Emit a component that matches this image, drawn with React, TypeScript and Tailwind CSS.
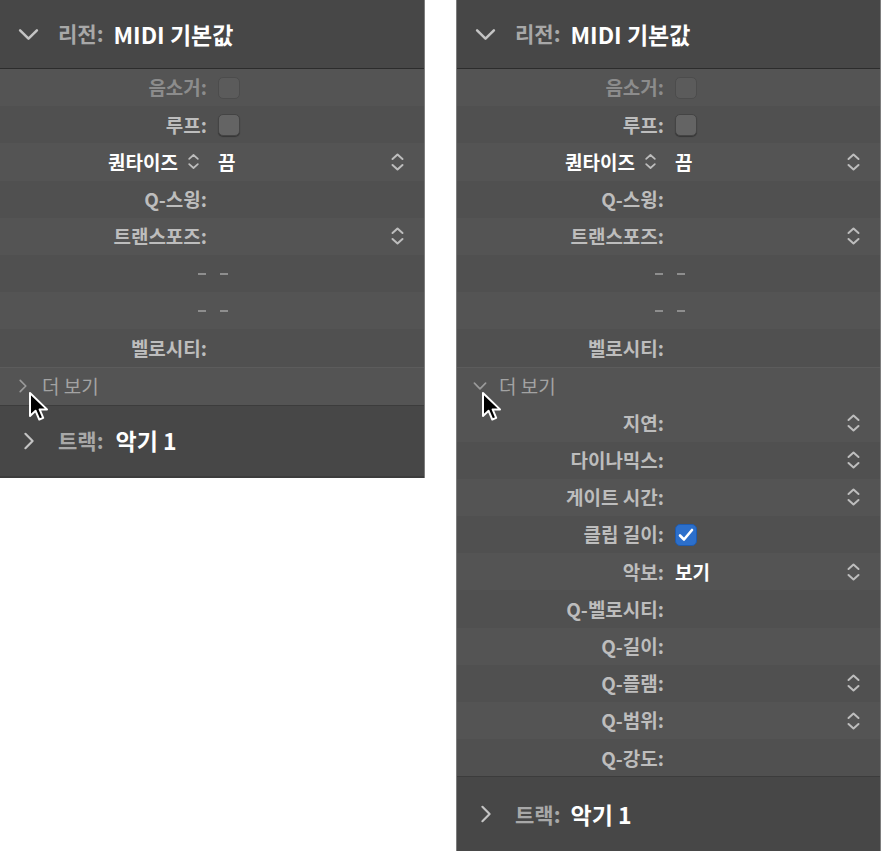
import React from "react";

const font = { fontFamily: '"Noto Sans CJK KR", "Noto Sans", sans-serif' };

function UpDown({ small = false }: { small?: boolean }) {
  return (
    <svg
      width={small ? 13 : 15}
      height={small ? 19 : 20}
      viewBox="0 0 15 20"
      fill="none"
      stroke="#bdbdbd"
      strokeWidth="2"
      strokeLinecap="round"
      strokeLinejoin="round"
    >
      <path d="M2.5 7 L7.5 2.5 L12.5 7" />
      <path d="M2.5 13 L7.5 17.5 L12.5 13" />
    </svg>
  );
}

function Chevron({ dir, size = 20, color = "#c4c4c4", stroke = 2.4 }: { dir: "down" | "right"; size?: number; color?: string; stroke?: number }) {
  return (
    <svg width={size} height={size} viewBox="0 0 20 20" fill="none" stroke={color} strokeWidth={stroke} strokeLinecap="round" strokeLinejoin="round">
      {dir === "down" ? <path d="M2 6 L10 14 L18 6" /> : <path d="M6 2 L14 10 L6 18" />}
    </svg>
  );
}

function Cursor({ left }: { left: string }) {
  return (
    <svg width="23" height="32" viewBox="0 0 23 32" className={`absolute top-[23px] ${left}`}>
      <path
        d="M2 2 L2 25 L7.6 19.8 L11.3 28.5 L15.2 26.8 L11.6 18.4 L19 18.4 Z"
        fill="#000"
        stroke="#fff"
        strokeWidth="2"
        strokeLinejoin="round"
      />
    </svg>
  );
}

function Checkbox({ dim = false, checked = false }: { dim?: boolean; checked?: boolean }) {
  if (checked) {
    return (
      <div className="w-[22px] h-[22px] rounded-[5px] bg-[#2c6fcb] border border-[#1d5bb0] flex items-center justify-center">
        <svg width="16" height="14" viewBox="0 0 16 14" fill="none" stroke="#fff" strokeWidth="2.6" strokeLinecap="round" strokeLinejoin="round">
          <path d="M2 7.5 L6 11.5 L14 2" />
        </svg>
      </div>
    );
  }
  return (
    <div
      className={
        dim
          ? "w-[22px] h-[22px] rounded-[5px] bg-[#5b5b5b] border border-[#4c4c4c]"
          : "w-[22px] h-[22px] rounded-[5px] bg-[#646464] border border-[#444] shadow-[0_1px_1px_rgba(0,0,0,0.35)]"
      }
    />
  );
}

type Row = {
  label?: string;
  dim?: boolean;
  white?: boolean;
  value?: React.ReactNode;
  updown?: boolean;
  dashes?: boolean;
  labelChevron?: boolean;
};

function Dash() {
  return <span className="block w-[8px] h-[2px] bg-[#8e8e8e]" />;
}

function PropRow({ row, odd }: { row: Row; odd: boolean }) {
  return (
    <div className={`flex items-center h-[37.2px] ${odd ? "bg-[#505050]" : "bg-[#545454]"}`}>
      <div
        className={`w-[207px] shrink-0 flex items-center justify-end text-[19px] font-semibold ${
          row.dim ? "text-[#8c8c8c]" : row.white ? "text-white" : "text-[#bdbdbd]"
        }`}
      >
        {row.dashes ? (
          <span className="mr-[1px]">
            <Dash />
          </span>
        ) : (
          <span>{row.label}</span>
        )}
        {row.labelChevron && (
          <span className="ml-[9px] mr-[7px] flex items-center">
            <UpDown small />
          </span>
        )}
      </div>
      <div className="flex-1 pl-[11px] flex items-center text-[19px] font-semibold text-white">
        {row.dashes ? (
          <span className="ml-[2px]">
            <Dash />
          </span>
        ) : (
          row.value
        )}
      </div>
      {row.updown && (
        <div className="pr-[19px] flex items-center">
          <UpDown />
        </div>
      )}
    </div>
  );
}

const baseRows: Row[] = [
  { label: "음소거:", dim: true, value: <Checkbox dim /> },
  { label: "루프:", value: <Checkbox /> },
  { label: "퀀타이즈", white: true, labelChevron: true, value: <span>끔</span>, updown: true },
  { label: "Q-스윙:" },
  { label: "트랜스포즈:", updown: true },
  { dashes: true },
  { dashes: true },
  { label: "벨로시티:" },
];

const moreRows: Row[] = [
  { label: "지연:", updown: true },
  { label: "다이나믹스:", updown: true },
  { label: "게이트 시간:", updown: true },
  { label: "클립 길이:", value: <Checkbox checked /> },
  { label: "악보:", value: <span>보기</span>, updown: true },
  { label: "Q-벨로시티:" },
  { label: "Q-길이:" },
  { label: "Q-플램:", updown: true },
  { label: "Q-범위:", updown: true },
  { label: "Q-강도:" },
];

function Panel({ expanded }: { expanded: boolean }) {
  return (
    <div
      className={`w-[425px] bg-[#474747] ${expanded ? "border-l border-r border-[#7d7d7d]" : "border-r border-[#7d7d7d]"}`}
      style={font}
    >
      <div className="h-[69px] flex items-center pl-[18px] border-b border-[#2c2c2c]">
        <Chevron dir="down" size={21} />
        <span className="ml-[19px] text-[21px] font-semibold text-[#a8a8a8]">리전:</span>
        <span className="ml-[10px] text-[23px] font-semibold text-white">MIDI 기본값</span>
      </div>
      {baseRows.map((r, i) => (
        <PropRow key={i} row={r} odd={i % 2 === 1} />
      ))}
      <div className="relative h-[38px] flex items-center bg-[#545454] border-t border-[#5c5c5c] pl-[16px]">
        <Chevron dir={expanded ? "down" : "right"} size={14} color="#9a9a9a" stroke={2.4} />
        <span className="ml-[12px] text-[19px] text-[#a3a3a3]">더 보기</span>
        <Cursor left={expanded ? "left-[24px]" : "left-[28px]"} />
      </div>
      {expanded && moreRows.map((r, i) => <PropRow key={i} row={r} odd={i % 2 === 1} />)}
      <div
        className={`${expanded ? "h-[75px]" : "h-[73px] border-b-2 border-[#2e2e2e]"} flex items-center pl-[20px] border-t border-[#3c3c3c]`}
      >
        <Chevron dir="right" size={18} />
        <span className="ml-[20px] text-[21px] font-semibold text-[#a8a8a8]">트랙:</span>
        <span className={`${expanded ? "ml-[10px]" : "ml-[12px]"} text-[23px] font-semibold text-white`}>악기 1</span>
      </div>
    </div>
  );
}

export default function App() {
  return (
    <div className="w-[886px] h-[851px] bg-white flex items-start gap-[31px] overflow-hidden">
      <Panel expanded={false} />
      <Panel expanded />
    </div>
  );
}
